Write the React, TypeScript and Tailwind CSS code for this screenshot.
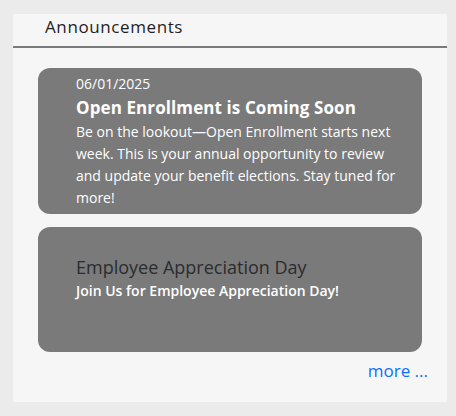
import React from 'react';

const font = { fontFamily: '"Open Sans", Lato, sans-serif' };

type Announcement = {
  date?: string;
  title: string;
  body: string;
  featured?: boolean;
};

const announcements: Announcement[] = [
  {
    date: '06/01/2025',
    title: 'Open Enrollment is Coming Soon',
    body:
      'Be on the lookout\u2014Open Enrollment starts next week. This is your annual opportunity to review and update your benefit elections. Stay tuned for more!',
    featured: true,
  },
  {
    title: 'Employee Appreciation Day',
    body: 'Join Us for Employee Appreciation Day!',
  },
];

export default function App() {
  return (
    <div className="min-h-[416px] w-[456px] bg-[#ebebeb] pl-[13px] pt-[14px]" style={font}>
      <div className="flex h-[388px] w-[434px] flex-col bg-[#f6f6f6]">
        {/* Header */}
        <div className="h-[34px] border-b-2 border-[#7a7a7a] pl-[32px] pt-[1px]">
          <h2 className="text-[17px] leading-[24px] tracking-[0.6px] text-[#1f1f1f]">Announcements</h2>
        </div>

        {/* Cards */}
        <div className="flex flex-col gap-[13px] px-[25px] pt-[20px]">
          {announcements.map((a) =>
            a.featured ? (
              <div key={a.title} className="rounded-[12px] bg-[#7a7a7a] pb-[5px] pl-[38px] pr-[10px] pt-[6px] text-white">
                <div className="text-[14px] leading-[20px]">{a.date}</div>
                <div className="mt-[1px] text-[17px] font-bold leading-[26px] tracking-[0.1px]">{a.title}</div>
                <p className="text-[14px] font-medium leading-[22px]">{a.body}</p>
              </div>
            ) : (
              <div key={a.title} className="h-[125px] rounded-[12px] bg-[#7a7a7a] pl-[38px] pr-[10px] pt-[28px]">
                <div className="text-[18px] leading-[24px] text-[#2a2c30]">{a.title}</div>
                <p className="mt-[2px] text-[14px] font-semibold leading-[20px] text-white">{a.body}</p>
              </div>
            )
          )}
        </div>

        <div className="flex justify-end pr-[19px] pt-[7px]">
          <a href="#" className="text-[17px] leading-[24px] text-[#0d6efd]">
            more ...
          </a>
        </div>
      </div>
    </div>
  );
}
